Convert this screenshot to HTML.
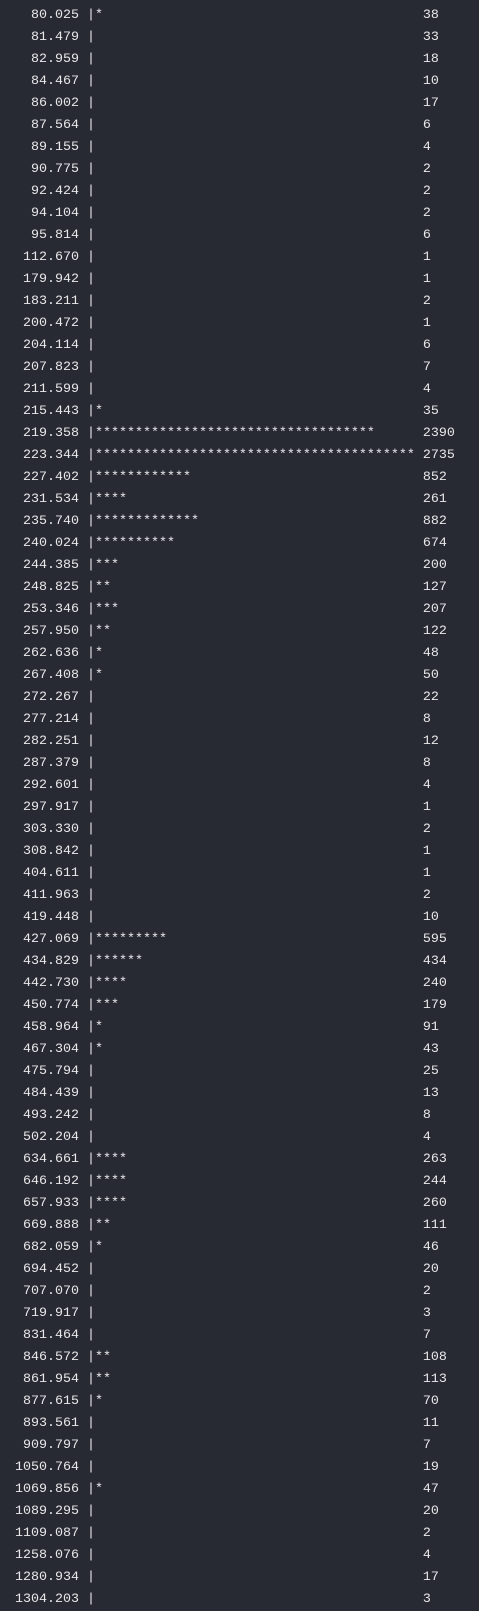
<!DOCTYPE html>
<html><head><meta charset="utf-8"><style>
html,body{margin:0;padding:0;background:#282a33;}
body{width:479px;height:1595px;overflow:hidden;position:relative;}
#t{position:absolute;left:-1px;top:-17px;font-family:"Liberation Mono",monospace;font-size:13.33px;line-height:22px;color:#e8e8ea;}
#t div{height:22px;white-space:pre;}
.l{display:inline-block;width:10ch;text-align:right;}
.b{display:inline-block;width:40ch;}
</style></head><body><div id="t"><div><span class="l">78.609</span> |<span class="b"></span> 37</div><div><span class="l">80.025</span> |<span class="b">*</span> 38</div><div><span class="l">81.479</span> |<span class="b"></span> 33</div><div><span class="l">82.959</span> |<span class="b"></span> 18</div><div><span class="l">84.467</span> |<span class="b"></span> 10</div><div><span class="l">86.002</span> |<span class="b"></span> 17</div><div><span class="l">87.564</span> |<span class="b"></span> 6</div><div><span class="l">89.155</span> |<span class="b"></span> 4</div><div><span class="l">90.775</span> |<span class="b"></span> 2</div><div><span class="l">92.424</span> |<span class="b"></span> 2</div><div><span class="l">94.104</span> |<span class="b"></span> 2</div><div><span class="l">95.814</span> |<span class="b"></span> 6</div><div><span class="l">112.670</span> |<span class="b"></span> 1</div><div><span class="l">179.942</span> |<span class="b"></span> 1</div><div><span class="l">183.211</span> |<span class="b"></span> 2</div><div><span class="l">200.472</span> |<span class="b"></span> 1</div><div><span class="l">204.114</span> |<span class="b"></span> 6</div><div><span class="l">207.823</span> |<span class="b"></span> 7</div><div><span class="l">211.599</span> |<span class="b"></span> 4</div><div><span class="l">215.443</span> |<span class="b">*</span> 35</div><div><span class="l">219.358</span> |<span class="b">***********************************</span> 2390</div><div><span class="l">223.344</span> |<span class="b">****************************************</span> 2735</div><div><span class="l">227.402</span> |<span class="b">************</span> 852</div><div><span class="l">231.534</span> |<span class="b">****</span> 261</div><div><span class="l">235.740</span> |<span class="b">*************</span> 882</div><div><span class="l">240.024</span> |<span class="b">**********</span> 674</div><div><span class="l">244.385</span> |<span class="b">***</span> 200</div><div><span class="l">248.825</span> |<span class="b">**</span> 127</div><div><span class="l">253.346</span> |<span class="b">***</span> 207</div><div><span class="l">257.950</span> |<span class="b">**</span> 122</div><div><span class="l">262.636</span> |<span class="b">*</span> 48</div><div><span class="l">267.408</span> |<span class="b">*</span> 50</div><div><span class="l">272.267</span> |<span class="b"></span> 22</div><div><span class="l">277.214</span> |<span class="b"></span> 8</div><div><span class="l">282.251</span> |<span class="b"></span> 12</div><div><span class="l">287.379</span> |<span class="b"></span> 8</div><div><span class="l">292.601</span> |<span class="b"></span> 4</div><div><span class="l">297.917</span> |<span class="b"></span> 1</div><div><span class="l">303.330</span> |<span class="b"></span> 2</div><div><span class="l">308.842</span> |<span class="b"></span> 1</div><div><span class="l">404.611</span> |<span class="b"></span> 1</div><div><span class="l">411.963</span> |<span class="b"></span> 2</div><div><span class="l">419.448</span> |<span class="b"></span> 10</div><div><span class="l">427.069</span> |<span class="b">*********</span> 595</div><div><span class="l">434.829</span> |<span class="b">******</span> 434</div><div><span class="l">442.730</span> |<span class="b">****</span> 240</div><div><span class="l">450.774</span> |<span class="b">***</span> 179</div><div><span class="l">458.964</span> |<span class="b">*</span> 91</div><div><span class="l">467.304</span> |<span class="b">*</span> 43</div><div><span class="l">475.794</span> |<span class="b"></span> 25</div><div><span class="l">484.439</span> |<span class="b"></span> 13</div><div><span class="l">493.242</span> |<span class="b"></span> 8</div><div><span class="l">502.204</span> |<span class="b"></span> 4</div><div><span class="l">634.661</span> |<span class="b">****</span> 263</div><div><span class="l">646.192</span> |<span class="b">****</span> 244</div><div><span class="l">657.933</span> |<span class="b">****</span> 260</div><div><span class="l">669.888</span> |<span class="b">**</span> 111</div><div><span class="l">682.059</span> |<span class="b">*</span> 46</div><div><span class="l">694.452</span> |<span class="b"></span> 20</div><div><span class="l">707.070</span> |<span class="b"></span> 2</div><div><span class="l">719.917</span> |<span class="b"></span> 3</div><div><span class="l">831.464</span> |<span class="b"></span> 7</div><div><span class="l">846.572</span> |<span class="b">**</span> 108</div><div><span class="l">861.954</span> |<span class="b">**</span> 113</div><div><span class="l">877.615</span> |<span class="b">*</span> 70</div><div><span class="l">893.561</span> |<span class="b"></span> 11</div><div><span class="l">909.797</span> |<span class="b"></span> 7</div><div><span class="l">1050.764</span> |<span class="b"></span> 19</div><div><span class="l">1069.856</span> |<span class="b">*</span> 47</div><div><span class="l">1089.295</span> |<span class="b"></span> 20</div><div><span class="l">1109.087</span> |<span class="b"></span> 2</div><div><span class="l">1258.076</span> |<span class="b"></span> 4</div><div><span class="l">1280.934</span> |<span class="b"></span> 17</div><div><span class="l">1304.203</span> |<span class="b"></span> 3</div></div></body></html>
